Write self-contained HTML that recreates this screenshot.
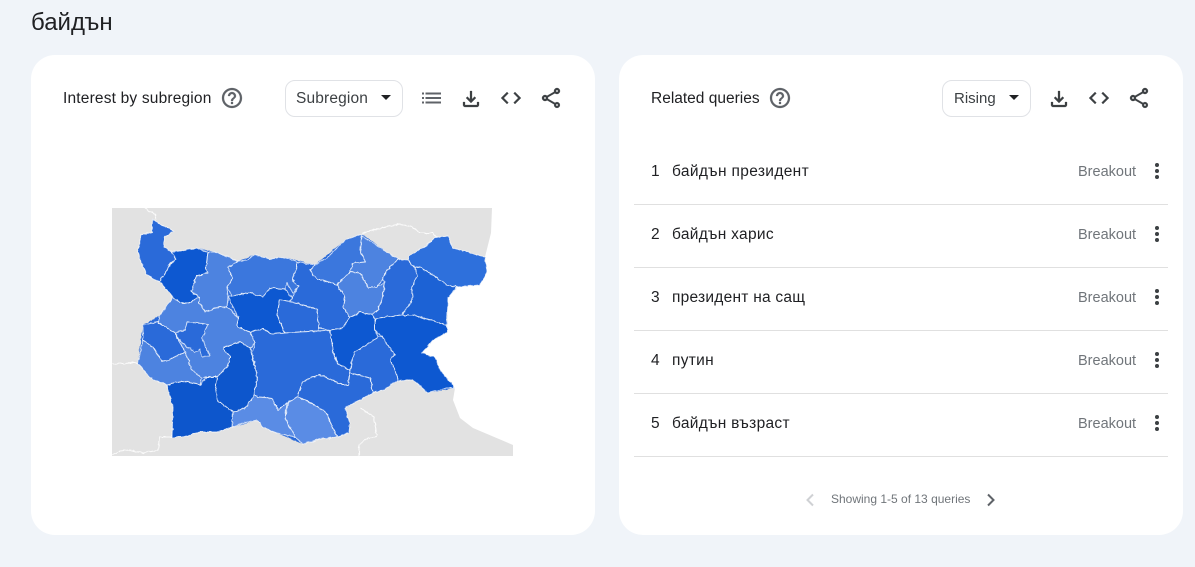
<!DOCTYPE html>
<html><head><meta charset="utf-8"><style>
html,body{margin:0;padding:0;width:1195px;height:567px;overflow:hidden;background:#f0f4f9;font-family:"Liberation Sans","Noto Sans CJK JP",sans-serif;color:#202124}
.a{position:absolute;white-space:nowrap}
.card{position:absolute;top:55px;width:564px;height:480px;background:#fff;border-radius:24px}
.t{font-size:15.5px;line-height:20px}
.sel{position:absolute;top:80px;height:35px;border:1px solid #e0e2e6;border-radius:10px;background:#fff}
.sep{position:absolute;left:634px;width:534px;height:1px;background:#e0e0e0}
.bo{position:absolute;left:1078px;font-size:14.5px;line-height:18px;color:#70757a;white-space:nowrap}
svg.i{position:absolute;width:24px;height:24px;fill:#3c4043;stroke:#3c4043;stroke-width:.25}
.dots{position:absolute;left:1155px;width:4px;height:4px;border-radius:50%;background:#3c4043}
.dots:before,.dots:after{content:"";position:absolute;left:0;width:4px;height:4px;border-radius:50%;background:#3c4043}
.dots:before{top:-6px}.dots:after{top:6px}
</style></head><body>
<div class="a" style="left:31px;top:10px;font-size:24px;line-height:26px">байдън</div>
<div class="card" style="left:31px"></div>
<div class="card" style="left:619px"></div>

<div class="a t" style="left:63px;top:89px;letter-spacing:.18px">Interest by subregion</div>
<svg class="i" style="left:220px;top:86px;fill:#5f6368;stroke:#5f6368" viewBox="0 0 24 24"><path d="M11 18h2v-2h-2v2zm1-16C6.48 2 2 6.48 2 12s4.48 10 10 10 10-4.48 10-10S17.52 2 12 2zm0 18c-4.41 0-8-3.59-8-8s3.59-8 8-8 8 3.59 8 8-3.59 8-8 8zm0-14c-2.21 0-4 1.79-4 4h2c0-1.1.9-2 2-2s2 .9 2 2c0 2-3 1.75-3 5h2c0-2.25 3-2.5 3-5 0-2.21-1.79-4-4-4z"/></svg>
<div class="sel" style="left:285px;width:116px"></div>
<div class="a t" style="left:296px;top:89px;letter-spacing:.15px;color:#3c4043">Subregion</div>
<svg class="a" style="left:380px;top:94px" width="12" height="7"><path d="M1 1h10l-5 5z" fill="#202124"/></svg>
<svg class="a" style="left:421px;top:91px" width="21" height="14" fill="#5f6368"><rect x="1" y="1.5" width="2" height="2"/><rect x="4.5" y="1.5" width="15.5" height="2"/><rect x="1" y="6" width="2" height="2"/><rect x="4.5" y="6" width="15.5" height="2"/><rect x="1" y="10.5" width="2" height="2"/><rect x="4.5" y="10.5" width="15.5" height="2"/></svg>
<svg class="i" style="left:459px;top:87px" viewBox="0 0 24 24"><path d="M18 15v3H6v-3H4v3c0 1.1.9 2 2 2h12c1.1 0 2-.9 2-2v-3h-2zm-1-4l-1.41-1.41L13 12.17V4h-2v8.17L8.41 9.59 7 11l5 5 5-5z"/></svg>
<svg class="i" style="left:499px;top:86px" viewBox="0 0 24 24"><path d="M9.4 16.6L4.8 12l4.6-4.6L8 6l-6 6 6 6 1.4-1.4zm5.2 0l4.6-4.6-4.6-4.6L16 6l6 6-6 6-1.4-1.4z"/></svg>
<svg class="i" style="left:539px;top:86px" viewBox="0 0 24 24"><path d="M18 16.08c-.76 0-1.44.3-1.96.77L8.91 12.7c.05-.23.09-.46.09-.7s-.04-.47-.09-.7l7.05-4.11c.54.5 1.25.81 2.04.81 1.66 0 3-1.34 3-3s-1.34-3-3-3-3 1.34-3 3c0 .24.04.47.09.7L8.04 9.81C7.5 9.31 6.79 9 6 9c-1.66 0-3 1.34-3 3s1.34 3 3 3c.79 0 1.5-.31 2.04-.81l7.12 4.16c-.05.21-.08.43-.08.65 0 1.61 1.31 2.92 2.92 2.92s2.92-1.31 2.92-2.92-1.31-2.92-2.92-2.92zM18 4c.55 0 1 .45 1 1s-.45 1-1 1-1-.45-1-1 .45-1 1-1zM6 13c-.55 0-1-.45-1-1s.45-1 1-1 1 .45 1 1-.45 1-1 1zm12 7.02c-.55 0-1-.45-1-1s.45-1 1-1 1 .45 1 1-.45 1-1 1z"/></svg>

<div class="a t" style="left:651px;top:89px;letter-spacing:0">Related queries</div>
<svg class="i" style="left:768px;top:86px;fill:#5f6368;stroke:#5f6368" viewBox="0 0 24 24"><path d="M11 18h2v-2h-2v2zm1-16C6.48 2 2 6.48 2 12s4.48 10 10 10 10-4.48 10-10S17.52 2 12 2zm0 18c-4.41 0-8-3.59-8-8s3.59-8 8-8 8 3.59 8 8-3.59 8-8 8zm0-14c-2.21 0-4 1.79-4 4h2c0-1.1.9-2 2-2s2 .9 2 2c0 2-3 1.75-3 5h2c0-2.25 3-2.5 3-5 0-2.21-1.79-4-4-4z"/></svg>
<div class="sel" style="left:942px;width:87px"></div>
<div class="a t" style="left:954px;top:89px;font-size:15px;color:#3c4043">Rising</div>
<svg class="a" style="left:1008px;top:94px" width="12" height="7"><path d="M1 1h10l-5 5z" fill="#202124"/></svg>
<svg class="i" style="left:1047px;top:87px" viewBox="0 0 24 24"><path d="M18 15v3H6v-3H4v3c0 1.1.9 2 2 2h12c1.1 0 2-.9 2-2v-3h-2zm-1-4l-1.41-1.41L13 12.17V4h-2v8.17L8.41 9.59 7 11l5 5 5-5z"/></svg>
<svg class="i" style="left:1087px;top:86px" viewBox="0 0 24 24"><path d="M9.4 16.6L4.8 12l4.6-4.6L8 6l-6 6 6 6 1.4-1.4zm5.2 0l4.6-4.6-4.6-4.6L16 6l6 6-6 6-1.4-1.4z"/></svg>
<svg class="i" style="left:1127px;top:86px" viewBox="0 0 24 24"><path d="M18 16.08c-.76 0-1.44.3-1.96.77L8.91 12.7c.05-.23.09-.46.09-.7s-.04-.47-.09-.7l7.05-4.11c.54.5 1.25.81 2.04.81 1.66 0 3-1.34 3-3s-1.34-3-3-3-3 1.34-3 3c0 .24.04.47.09.7L8.04 9.81C7.5 9.31 6.79 9 6 9c-1.66 0-3 1.34-3 3s1.34 3 3 3c.79 0 1.5-.31 2.04-.81l7.12 4.16c-.05.21-.08.43-.08.65 0 1.61 1.31 2.92 2.92 2.92s2.92-1.31 2.92-2.92-1.31-2.92-2.92-2.92zM18 4c.55 0 1 .45 1 1s-.45 1-1 1-1-.45-1-1 .45-1 1-1zM6 13c-.55 0-1-.45-1-1s.45-1 1-1 1 .45 1 1-.45 1-1 1zm12 7.02c-.55 0-1-.45-1-1s.45-1 1-1 1 .45 1 1-.45 1-1 1z"/></svg>

<div class="a t" style="left:651px;top:162px">1</div><div class="a t" style="left:672px;top:162px;letter-spacing:.35px">байдън президент</div><div class="bo" style="top:163px">Breakout</div><div class="dots" style="top:169px"></div><div class="sep" style="top:204px"></div>
<div class="a t" style="left:651px;top:225px">2</div><div class="a t" style="left:672px;top:225px;letter-spacing:.3px">байдън харис</div><div class="bo" style="top:226px">Breakout</div><div class="dots" style="top:232px"></div><div class="sep" style="top:267px"></div>
<div class="a t" style="left:651px;top:288px">3</div><div class="a t" style="left:672px;top:288px;letter-spacing:.25px">президент на сащ</div><div class="bo" style="top:289px">Breakout</div><div class="dots" style="top:295px"></div><div class="sep" style="top:330px"></div>
<div class="a t" style="left:651px;top:351px">4</div><div class="a t" style="left:672px;top:351px;letter-spacing:.3px">путин</div><div class="bo" style="top:352px">Breakout</div><div class="dots" style="top:358px"></div><div class="sep" style="top:393px"></div>
<div class="a t" style="left:651px;top:414px">5</div><div class="a t" style="left:672px;top:414px;letter-spacing:.3px">байдън възраст</div><div class="bo" style="top:415px">Breakout</div><div class="dots" style="top:421px"></div><div class="sep" style="top:456px"></div>

<svg class="a" style="left:804px;top:492px" width="12" height="16"><path d="M9 2.5L3.5 8 9 13.5" fill="none" stroke="#cfd1d4" stroke-width="2"/></svg>
<div class="a" style="left:831px;top:491px;font-size:12px;line-height:16px;color:#70757a">Showing 1-5 of 13 queries</div>
<svg class="a" style="left:985px;top:492px" width="12" height="16"><path d="M3 2.5L8.5 8 3 13.5" fill="none" stroke="#5f6368" stroke-width="2"/></svg>

<svg class="a" style="left:0;top:0" width="1195" height="567" viewBox="0 0 1195 567">
<defs><filter id="w" x="100" y="200" width="420" height="265" filterUnits="userSpaceOnUse"><feTurbulence type="fractalNoise" baseFrequency=".22" numOctaves="2" seed="4"/><feDisplacementMap in="SourceGraphic" scale="3" xChannelSelector="R" yChannelSelector="G"/></filter></defs>
<polygon fill="#e2e2e2" points="112,208 492,208 491,233 485,257 487,272 480,285 457,287 448,298 447,333 433,340 422,353 435,357 440,370 455,388 453,400 460,418 473,428 513,445 513,456 112,456"/>
<g filter="url(#w)">
<g fill="none" stroke="#fff" stroke-width="1.1" opacity=".85">
<polyline points="145,208 150,212 155,214 156,220"/>
<polyline points="112,364 133,363 138,363"/>
<polyline points="112,455 120,451 130,450 143,453 158,450 160,437 172,437"/>
<polyline points="362,233 390,226 400,224 412,227 420,233 433,233 437,238"/>
<polyline points="360,408 374,417 377,437 368,438 359,445 359,456"/>
</g>
<polygon fill="#2b6bd9" points="172,252 197,248 215,252 238,261 255,255 270,259 283,257 315,265 345,240 362,234 387,252 398,259 408,260 427,245 448,236 453,248 485,257 487,272 480,285 457,287 448,298 447,333 433,340 422,353 435,357 440,370 455,388 428,393 413,380 398,381 373,393 345,408 349,433 320,439 303,444 277,433 258,420 232,427 200,432 172,437 173,408 167,385 138,363 143,325 160,315 173,297 160,282 172,270"/>
<g stroke="#fff" stroke-opacity=".75" stroke-width="1" stroke-linejoin="round">
<polygon fill="#2b6bd9" points="153,220 174,231 165,237 164,247 172,252 176,259 170,263 168,268 160,282 147,275 140,260 138,250 141,235 152,232"/>
<polygon fill="#1059d1" points="172,252 197,248 208,252 206,268 208,273 197,276 191,291 199,297 189,303 180,303 173,297 160,282 168,268 176,259"/>
<polygon fill="#4d83e0" points="208,252 215,252 238,261 228,268 233,278 227,287 228,297 227,307 215,308 205,312 199,303 199,297 191,291 197,276 208,273 206,268"/>
<polygon fill="#3b77dd" points="238,261 247,260 255,255 270,259 283,257 297,262 297,268 292,280 299,286 293,293 287,283 285,289 270,288 263,297 253,295 250,293 232,296 227,287 233,278 228,268"/>
<polygon fill="#1059d1" points="232,296 250,293 263,297 270,288 285,289 292,298 290,302 280,300 277,315 285,333 273,334 263,329 250,332 238,327 238,317 228,297"/>
<polygon fill="#2b6bd9" points="280,300 290,302 300,304 317,309 319,328 318,331 300,332 285,333 277,315"/>
<polygon fill="#2b6bd9" points="297,262 315,265 310,270 317,280 323,280 337,285 345,297 343,307 350,317 343,328 330,330 319,328 317,309 300,304 290,302 292,298 299,286 292,280 297,268"/>
<polygon fill="#3b77dd" points="315,265 327,258 345,240 362,234 360,250 366,262 353,263 350,272 342,280 337,285 323,280 317,280 310,270"/>
<polygon fill="#4d83e0" points="362,236 387,252 398,259 387,270 382,280 377,287 368,287 360,273 350,272 353,263 366,262 360,250"/>
<polygon fill="#4d83e0" points="350,272 360,273 368,287 377,287 385,282 382,300 378,310 372,315 360,312 350,317 343,307 345,297 337,285 342,280"/>
<polygon fill="#2b6bd9" points="398,259 408,260 415,268 417,277 412,287 413,297 408,307 402,315 383,317 375,320 372,315 378,310 382,300 385,282 382,280 387,270"/>
<polygon fill="#2f6fdc" points="410,255 427,245 435,238 448,236 453,248 485,257 487,272 480,285 457,287 447,285 433,275 420,267 415,268 408,260"/>
<polygon fill="#1b62d5" points="415,268 420,267 433,275 447,285 457,287 448,298 447,325 413,315 402,315 408,307 413,297 412,287 417,277"/>
<polygon fill="#1059d1" points="375,320 383,317 402,315 413,315 447,325 447,333 433,340 422,353 435,357 440,370 455,388 447,388 428,393 413,380 398,381 395,370 390,360 395,355 382,337 375,330"/>
<polygon fill="#2b6bd9" points="378,337 363,347 355,352 352,360 350,373 370,378 373,393 385,389 398,381 395,370 390,360 395,355 382,337"/>
<polygon fill="#1059d1" points="330,330 343,328 350,317 360,312 372,315 375,320 375,330 378,337 363,347 355,352 352,360 350,370 337,363 333,350"/>
<polygon fill="#2b6bd9" points="250,332 263,329 273,334 285,333 300,332 318,331 330,330 333,350 337,363 350,370 348,385 343,385 332,380 320,375 312,377 303,382 297,397 287,403 278,410 272,398 257,397 254,395 257,377 252,353 255,343"/>
<polygon fill="#2b6bd9" points="297,397 303,382 312,377 320,375 332,380 343,385 348,385 350,373 370,378 373,393 360,400 345,408 350,423 349,433 338,437 332,427 328,415 320,408 305,400"/>
<polygon fill="#5a8ce5" points="297,397 305,400 320,408 328,415 332,427 338,437 320,439 303,444 295,437 285,418 288,403"/>
<polygon fill="#5a8ce5" points="233,412 245,408 254,395 257,397 272,398 278,410 287,403 285,418 295,437 277,433 263,428 258,420 243,423 232,427"/>
<polygon fill="#0f56cc" points="223,348 240,342 250,348 257,377 254,395 245,408 233,412 217,400 215,388 217,377 227,367 230,357"/>
<polygon fill="#0f56cc" points="167,385 183,381 200,385 207,377 217,377 215,388 217,400 233,412 232,427 217,432 200,432 183,437 172,437 173,408"/>
<polygon fill="#4d83e0" points="143,340 138,363 150,378 167,385 183,381 200,385 202,378 192,370 185,352 168,360 162,361 153,347"/>
<polygon fill="#2b6bd9" points="143,325 158,322 175,333 185,352 168,360 162,361 153,347 143,340"/>
<polygon fill="#4d83e0" points="173,297 180,303 189,303 199,297 199,303 205,312 215,308 227,307 238,317 238,327 250,332 255,343 250,348 240,342 223,348 230,357 227,367 217,377 207,377 202,378 192,370 185,352 175,333 158,322 160,315"/>
<polygon fill="#2b6bd9" points="187,322 208,324 202,338 210,356 202,357 200,349 195,352 182,343 175,333 185,330"/>
</g>
</g>
</svg>
</body></html>
